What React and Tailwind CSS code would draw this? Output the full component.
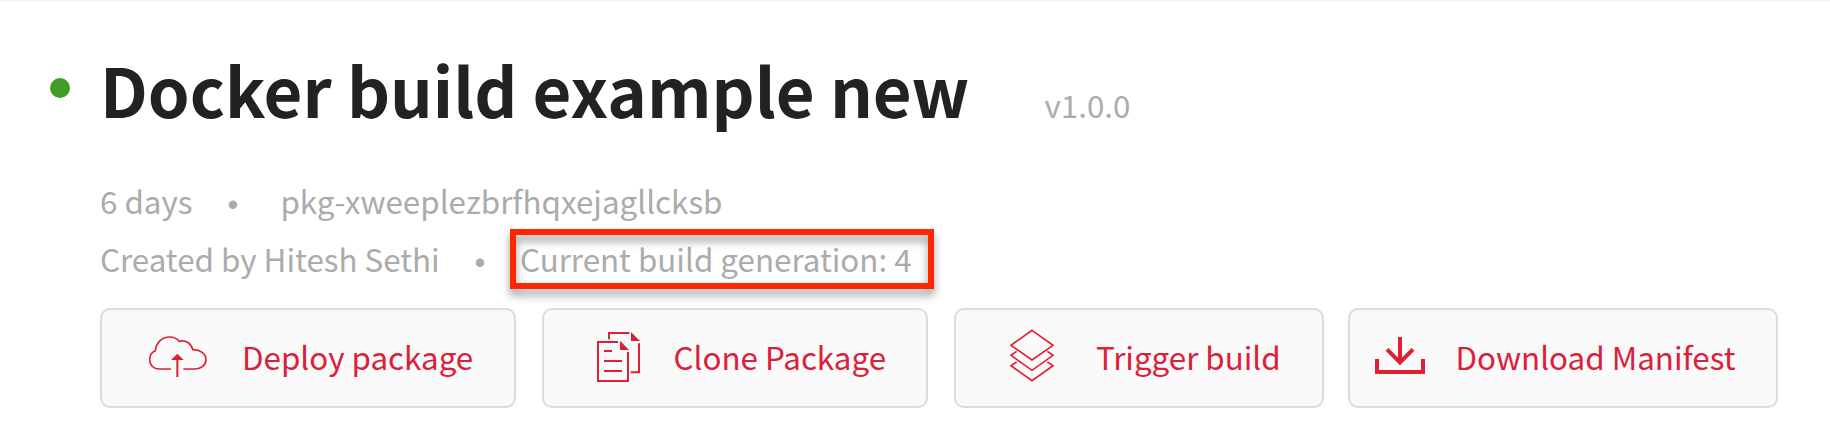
function CloudUploadIcon() {
  return (
    <svg viewBox="174 105 180 129" className="mt-[25px] h-[43px] w-[60px] shrink-0" fill="none" stroke="#e01f32" strokeWidth="5">
      <path d="M243 207H208C190 207 179 194 179 179C179 167 186 156 196 152C198 128 216 111 239 111C251 111 261 116 268 124C287 119 304 130 308 149C331 148 348 162 348 179C348 195 333 207 315 207H280" />
      <path d="M262 231V172" strokeWidth="6" />
      <path d="M262 161L281 180H243Z" fill="#e01f32" stroke="none" />
    </svg>
  );
}

function CopyPagesIcon() {
  return (
    <svg viewBox="198 93 135 156" className="mt-[21px] h-[52px] w-[45px] shrink-0" fill="none" stroke="#e01f32" strokeWidth="6">
      <path d="M264 126H204V243H294V155" />
      <path d="M237 118V99H298M327 130V217H302" />
      <path d="M222 153H246M222 183H276M222 213H276" />
      <path d="M270 122V150H297ZM303 96V123H330Z" fill="#e01f32" stroke="none" />
    </svg>
  );
}

function LayersIcon() {
  return (
    <svg viewBox="207 84 138 162" className="mt-[18px] h-[54px] w-[46px] shrink-0" fill="none" stroke="#e01f32" strokeWidth="5">
      <path d="M276 91L339 136L276 180L213 136Z" />
      <path d="M230 154L213 166L276 211L339 166L322 154" />
      <path d="M230 186L213 197L276 242L339 197L322 186" />
    </svg>
  );
}

function DownloadIcon() {
  return (
    <svg viewBox="105 108 153 117" className="mt-[26px] h-[39px] w-[51px] shrink-0" fill="none" stroke="#e01f32" strokeWidth="12">
      <path d="M111 177V216H249V177" />
      <path d="M180 111V186" />
      <path d="M141 148L180 187L219 148" />
    </svg>
  );
}

function Bullet({ className }) {
  return <span className={`mt-[4px] shrink-0 font-['Liberation_Sans',sans-serif] text-[31px] ${className}`}>•</span>;
}

function ActionButton({ className, labelClass, icon, children }) {
  return (
    <button
      className={`box-border flex h-[100px] shrink-0 items-start rounded-[10px] border-2 border-[#dcdcdc] bg-[#fafafa] text-left text-[#dd2038] ${className}`}
    >
      {icon}
      <span className={`-mt-px whitespace-nowrap leading-[96px] ${labelClass}`}>{children}</span>
    </button>
  );
}

export default function App() {
  return (
    <main className="h-[442px] w-[1830px] overflow-hidden border-t-2 border-[#f5f5f5] bg-white font-['Noto_Sans_CJK_SC','Source_Sans_Pro',sans-serif] text-[31.35px] text-[#ababab]">
      <header className="flex h-[80px] mt-[47px] pl-[50px] whitespace-nowrap">
        <span className="mt-[29px] size-5 shrink-0 rounded-full bg-[#429a27]" />
        <h1 className="ml-[30px] w-[944.5px] shrink-0 text-[67px] leading-[80px] font-bold text-[#222222]">
          Docker build example new
        </h1>
        <span className="mt-[16px] leading-[80px]">v1.0.0</span>
      </header>

      <section className="mt-[42px] pl-[100px] whitespace-nowrap">
        <div className="flex h-[58px] leading-[60px]">
          <span className="w-[127.4px] shrink-0">6 days</span>
          <Bullet className="w-[53px]" />
          <span>pkg-xweeplezbrfhqxejagllcksb</span>
        </div>
        <div className="flex h-[58px] leading-[60px]">
          <span className="w-[374.4px] shrink-0">Created by Hitesh Sethi</span>
          <Bullet className="w-[45.6px]" />
          <span className="relative">
            Current build generation: 4
            <span className="absolute top-0 -left-[10px] h-[60px] w-[424px] border-[6px] border-[#ff2600] drop-shadow-[0_6px_4px_rgba(0,0,0,0.4)]" />
          </span>
        </div>
      </section>

      <nav className="mt-[21px] flex pl-[100px]">
        <ActionButton className="w-[416px] pl-[46px]" labelClass="ml-[34px]" icon={<CloudUploadIcon />}>
          Deploy package
        </ActionButton>
        <ActionButton className="ml-[26px] w-[386px] pl-[52px]" labelClass="ml-[32.5px]" icon={<CopyPagesIcon />}>
          Clone Package
        </ActionButton>
        <ActionButton className="ml-[26px] w-[370px] pl-[53px]" labelClass="ml-[41px]" icon={<LayersIcon />}>
          Trigger build
        </ActionButton>
        <ActionButton className="ml-[24px] w-[430px] pl-[25px]" labelClass="ml-[29.5px]" icon={<DownloadIcon />}>
          Download Manifest
        </ActionButton>
      </nav>
    </main>
  );
}
